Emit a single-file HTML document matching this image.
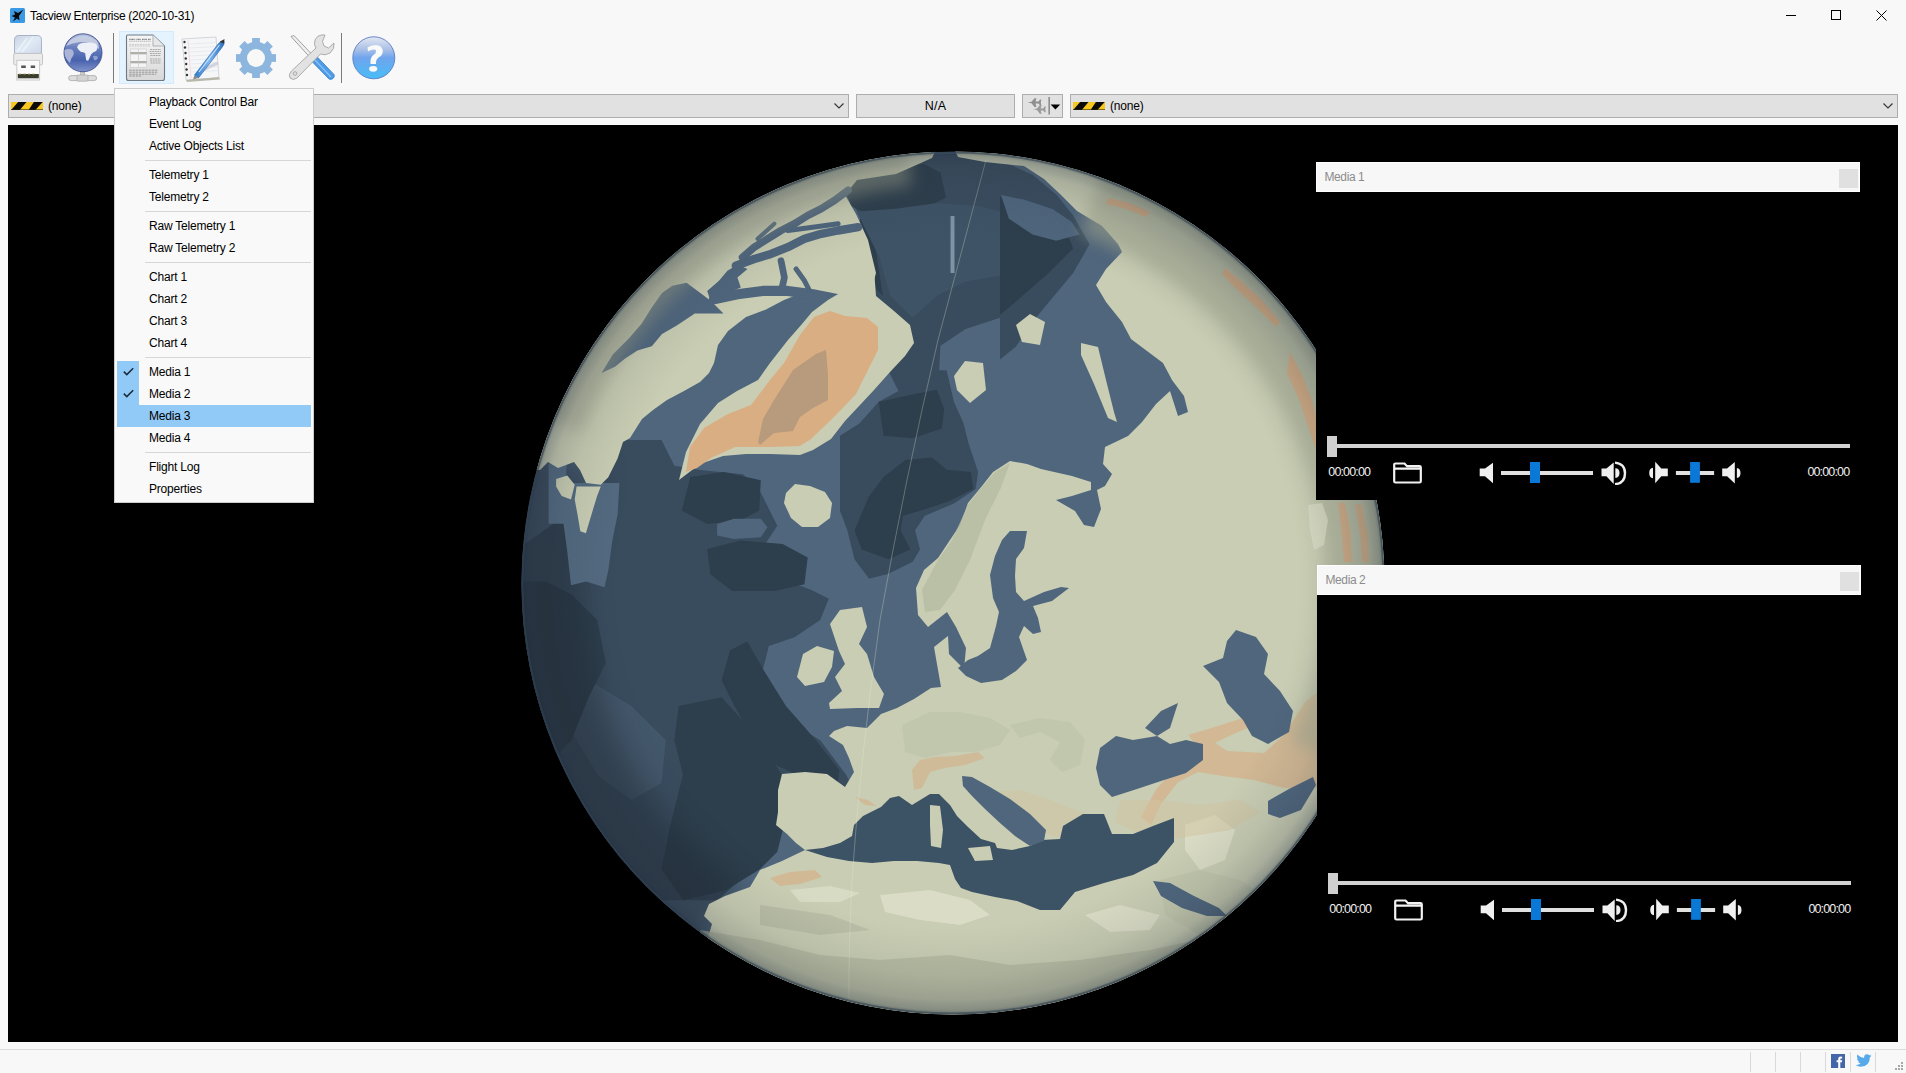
<!DOCTYPE html>
<html><head><meta charset="utf-8">
<style>
*{margin:0;padding:0;box-sizing:border-box}
html,body{width:1906px;height:1073px;overflow:hidden;background:#f8f8f8;font-family:"Liberation Sans",sans-serif;font-size:12px;color:#000}
.abs{position:absolute}
#title{left:30px;top:8.5px;font-size:12px;line-height:14px;color:#000;white-space:nowrap;letter-spacing:-0.3px}
.combo{position:absolute;top:94px;height:24px;background:#e1e1e1;border:1px solid #adadad}
.menu{position:absolute;left:114px;top:88px;width:200px;height:415px;background:#f9f9f9;border:1px solid #cccccc}
.mi{position:absolute;left:34px;font-size:12px;line-height:14px;color:#000;white-space:nowrap;letter-spacing:-0.2px}
.sep{position:absolute;left:30px;width:166px;height:1px;background:#d7d7d7}
#view{left:8px;top:125px;width:1890px;height:917px;background:#000;overflow:hidden}
.mhdr{position:absolute;background:#f7f7f7;border:1px solid #fff;height:30px}
.mhdr span{position:absolute;left:7.5px;top:6.8px;color:#8c8c8c;font-size:12px;line-height:14px;letter-spacing:-0.4px}
.mhdr i{position:absolute;right:1px;top:6px;width:19px;height:19px;background:#e0e0e0}
.time{position:absolute;color:#f0f0f0;font-size:12.5px;line-height:14px;letter-spacing:-0.85px;white-space:nowrap}
#status{left:0;top:1049px;width:1906px;height:24px;background:#f8f8f8;border-top:1px solid #dcdcdc}

</style></head><body>
<svg class="abs" style="left:10px;top:8px" width="15" height="15" viewBox="0 0 15 15">
<rect x="0" y="0" width="15" height="15" rx="1.5" fill="#3a9ae6"/>
<path d="M13.5 1.5 L8 5 L4 3 L5 6.5 L1.5 8 L5 9.5 L3 13.5 L7 10.5 L9.5 12.5 L9 8 Z" fill="#0a0a0a"/>
</svg>
<div id="title" class="abs">Tacview Enterprise (2020-10-31)</div>
<svg class="abs" style="left:1780px;top:5px" width="120" height="22" viewBox="0 0 120 22">
<line x1="6" y1="10.5" x2="16" y2="10.5" stroke="#000" stroke-width="1"/>
<rect x="51.5" y="5.5" width="9" height="9" fill="none" stroke="#000" stroke-width="1"/>
<path d="M96.5 5.5 L106.5 15.5 M106.5 5.5 L96.5 15.5" stroke="#000" stroke-width="1"/>
</svg>
<svg class="abs" style="left:0;top:28px" width="420" height="60" viewBox="0 28 420 60">
<defs>
<linearGradient id="usbcap" x1="0" y1="0" x2="1" y2="1"><stop offset="0" stop-color="#c9d3e3"/><stop offset="0.5" stop-color="#dfeaf5"/><stop offset="1" stop-color="#cdd6ea"/></linearGradient>
<radialGradient id="glb" cx="0.45" cy="0.3" r="0.8"><stop offset="0" stop-color="#9fb0d8"/><stop offset="0.6" stop-color="#4d6bb4"/><stop offset="1" stop-color="#34529c"/></radialGradient>
<linearGradient id="glb2" x1="0" y1="0" x2="0" y2="1"><stop offset="0" stop-color="#b9c3e0"/><stop offset="0.35" stop-color="#6a80bf"/><stop offset="0.7" stop-color="#4862ad"/><stop offset="1" stop-color="#8294cc"/></linearGradient>
<linearGradient id="page" x1="0" y1="0" x2="0" y2="1"><stop offset="0" stop-color="#f6f6f6"/><stop offset="1" stop-color="#d8d8d8"/></linearGradient>
<linearGradient id="help" x1="0" y1="0" x2="0" y2="1"><stop offset="0" stop-color="#e4e8f2"/><stop offset="0.3" stop-color="#a9c0e6"/><stop offset="0.5" stop-color="#6fa4ee"/><stop offset="1" stop-color="#48bdf6"/></linearGradient>
<linearGradient id="pen" x1="0" y1="0" x2="1" y2="0"><stop offset="0" stop-color="#2f78c8"/><stop offset="0.5" stop-color="#7fb6ee"/><stop offset="1" stop-color="#2a6fc0"/></linearGradient>
</defs>
<!-- USB -->
<path d="M14.5 53.5 L14.5 40 Q14.5 35.5 19 35.5 L37 35.5 Q41.5 35.5 41.5 40 L41.5 53.5Z" fill="url(#usbcap)" stroke="#a9b5c6" stroke-width="1"/>
<path d="M17 52 L27 38 M22 52 L33 37" stroke="#eef6fb" stroke-width="1.5" opacity="0.8"/>
<rect x="13.7" y="53.4" width="28.8" height="11.5" rx="1.5" fill="#ececec" stroke="#c4c4c4" stroke-width="1"/>
<rect x="16.8" y="60.3" width="22.8" height="19.7" fill="#fafafa" stroke="#c9c9c9" stroke-width="1"/>
<rect x="21.2" y="65.5" width="4.6" height="2.5" fill="#555"/>
<rect x="30.7" y="65.5" width="4.4" height="2.5" fill="#555"/>
<rect x="17.8" y="74" width="21" height="4.3" fill="#3b3d2c"/>
<path d="M19 74 h2 M23.5 74 h2 M28 74 h2 M32.5 74 h2" stroke="#b8a86a" stroke-width="1.2"/>
<!-- globe -->
<rect x="80.6" y="71" width="4.1" height="5" fill="#cfcfcf" stroke="#9a9a9a" stroke-width="0.5"/>
<rect x="68.6" y="75.6" width="28" height="5" rx="2.5" fill="#dcdcdc" stroke="#a8a8a8" stroke-width="0.8"/>
<rect x="77" y="75" width="11" height="6.2" rx="1.2" fill="#d2d2d2" stroke="#a0a0a0" stroke-width="0.6"/>
<circle cx="83" cy="52.8" r="19" fill="url(#glb2)" stroke="#3d4f90" stroke-width="0.9"/>
<path d="M66 46 Q70 38 80 36 Q90 35 97 41 Q99 45 99 49 Q90 41 80 42 Q72 43 66 46Z" fill="#c8cfe2" opacity="0.9"/>
<path d="M77.1 47.6 Q78 45 78.1 45.1 Q80 43.5 82.1 43.1 L90.2 42.6 Q94 43 96.2 44.1 L97.5 48 L96.2 51.1 Q93 52 91.2 54.2 Q89.5 58 88.2 60.7 L86.2 60.2 Q85.5 56 85.2 53.2 Q83 52 81.1 52.1 Q78.5 50.5 77.1 47.6Z" fill="#eef0f8"/>
<path d="M64.5 50 Q68 48.5 72 49.5 Q74.5 52 73.5 55 Q71 58 70 63 Q66.5 60 65 56 Q64.3 53 64.5 50Z" fill="#aab4d6"/>
<path d="M93 56 Q96 55 98 57 Q97 61 94 60Z" fill="#9fb0da" opacity="0.8"/>
<!-- sep -->
<rect x="113" y="33" width="1" height="50" fill="#7a7a7a"/>
<!-- highlight -->
<rect x="119.5" y="31.5" width="54" height="52" fill="#e5f3ff" stroke="#d4ebff" stroke-width="1"/>
<!-- doc -->
<path d="M127.5 35 L153 35 L164.5 46 L164.5 78.5 Q164.5 80.5 162.5 80.5 L128.5 80.5 Q126.5 80.5 126.5 78.5 L126.5 36 Q126.5 35 127.5 35Z" fill="url(#page)" stroke="#6b7a84" stroke-width="1.1"/>
<path d="M153 35 L153 46 L164.5 46" fill="#e8e8e8" stroke="#9aa4aa" stroke-width="0.8"/>
<path d="M129.2 39.3 h6 M136.5 39.3 h4.5 M142 39.3 h5 M148 39.3 h3" stroke="#7d7d7d" stroke-width="1.3" stroke-dasharray="1 0.4"/>
<path d="M129.2 41.2 h21.7" stroke="#9a9a9a" stroke-width="0.7" stroke-dasharray="1.5 0.6"/>
<path d="M129.2 44.6 h21.7 M129.2 46 h21.7" stroke="#b4b4b4" stroke-width="0.6" stroke-dasharray="2 0.7"/>
<rect x="130.4" y="49" width="16.3" height="18.2" fill="#f4f4f4" stroke="#c4c4c4" stroke-width="0.5"/>
<rect x="130.4" y="52" width="16.3" height="2.3" fill="#aeb0a8"/>
<rect x="130.4" y="61" width="16.3" height="2.3" fill="#aeb0a8"/>
<rect x="138.3" y="49" width="0.6" height="18.2" fill="#c4c4c4"/>
<path d="M150 49.5 h11 M149.5 51.5 h11.5 M150 53.5 h11 M150.5 55.5 h10.5 M150 59 h11 M150 61 h11 M150.5 63 h10.5" stroke="#8c8c8c" stroke-width="0.7" stroke-dasharray="2 0.6"/>
<path d="M129.2 70.2 h28.8 M129.2 72.2 h28.8 M129.2 74.2 h27 M129.2 76 h12" stroke="#7a7a7a" stroke-width="0.7" stroke-dasharray="2.5 0.7"/>
<!-- notepad -->
<path d="M182 39 L216 37 L219 78 L186 80Z" fill="#f5f6f8" stroke="#c9cbd0" stroke-width="0.8"/>
<path d="M188 40 L191 79" stroke="#f0c8c8" stroke-width="0.6"/>
<path d="M189 44 L217 42.5 M189 48 L217 46.5 M189.5 52 L217.5 50.5 M190 56 L218 54.5 M190 60 L218 58.5 M190.5 64 L218.5 62.5 M190.5 68 L218.5 66.5 M191 72 L219 70.5" stroke="#dfe3ea" stroke-width="0.6"/>
<g fill="#333"><circle cx="184.5" cy="42" r="1.2"/><circle cx="185" cy="47.5" r="1.2"/><circle cx="185.5" cy="53" r="1.2"/><circle cx="185.8" cy="58.5" r="1.2"/><circle cx="186.2" cy="64" r="1.2"/><circle cx="186.6" cy="69.5" r="1.2"/><circle cx="187" cy="75" r="1.2"/></g>
<path d="M186 80 L219 77 L220 79.5 L187 82Z" fill="#b8b8aa"/>
<path d="M200 72 Q206 68 218 63" stroke="#c5c8d2" stroke-width="3" opacity="0.7"/>
<path d="M194.5 75 L218.5 43.5 Q221.5 40 224 41 Q225 44 222 47.5 L198.5 78Z" fill="url(#pen)" stroke="#2a64b0" stroke-width="0.6"/>
<path d="M199 72 L219.5 45" stroke="#d6ebff" stroke-width="1.1" opacity="0.9"/>
<path d="M194.5 75 L193 79.5 L198.5 78Z" fill="#8a8a8a"/>
<path d="M219.5 42 L224.5 39 L224 43.5Z" fill="#333"/>
<!-- gear -->
<g transform="translate(256 58)" fill="#8db6de">
<circle r="16.3"/>
<g id="teeth"><rect x="-3.9" y="-20" width="7.8" height="6"/><rect x="-3.9" y="14" width="7.8" height="6"/><rect x="-20" y="-3.9" width="6" height="7.8"/><rect x="14" y="-3.9" width="6" height="7.8"/></g>
<g transform="rotate(45)"><rect x="-3.9" y="-20" width="7.8" height="6"/><rect x="-3.9" y="14" width="7.8" height="6"/><rect x="-20" y="-3.9" width="6" height="7.8"/><rect x="14" y="-3.9" width="6" height="7.8"/></g>
<circle r="9" fill="#f8f8f8"/>
</g>
<!-- tools -->
<path d="M291 36.5 L294 35.5 L313 55.5 L310.5 58Z" fill="#efefef" stroke="#8c8c8c" stroke-width="0.8"/>
<path d="M309 57.5 L313.5 53 L334 74.5 Q335 76.5 333 78.5 Q331 80 329 79 L308.5 58Z" fill="#4f9be6" stroke="#3a7fc8" stroke-width="0.8"/>
<path d="M313 58 L331 77" stroke="#86c0f5" stroke-width="1.3"/>
<path d="M325 35 Q318 34 315 40 Q313.5 45 316 48 L291.5 71 Q288 74.5 290 78 Q293 81 297 78 L320.5 54 Q325 56 330 53 Q335 49 334 43 L328.5 48 L324 46 L322.5 41.5Z" fill="#e2e2e2" stroke="#a4a4a4" stroke-width="0.9"/>
<circle cx="295" cy="73.5" r="1.8" fill="none" stroke="#9a9a9a" stroke-width="0.8"/>
<!-- sep -->
<rect x="341" y="33" width="1" height="50" fill="#7a7a7a"/>
<!-- help -->
<circle cx="373.8" cy="57.8" r="21" fill="url(#help)" stroke="#5b7bc4" stroke-width="0.9"/>
<path d="M367.5 47.5 Q371 45 375.5 45 Q382.5 45.5 382.8 51 Q383 55 378.5 57.5 Q376 59 376 62 L376 64 L370.5 64 L370.5 61 Q370.5 57 374 54.5 Q376.5 52.5 376 50.5 Q375.5 49 373 49.5 Q370 50 368 51.5Z" fill="#fafafa"/>
<ellipse cx="373.2" cy="68.8" rx="4.1" ry="2.9" fill="#fafafa"/>
</svg>

<div class="combo" style="left:8px;width:841px">
 <svg class="abs" style="left:2px;top:7px" width="32" height="8" viewBox="0 0 32 8"><rect width="32" height="8" fill="#f8c820"/><path d="M0.2 8 L8.8 8 L15.5 0 L7.1 0Z M17.6 8 L24.4 8 L31.7 0 L22.9 0Z" fill="#0a0a0a"/><rect y="7.2" width="32" height="0.8" fill="#2a2500" opacity="0.7"/></svg>
 <div class="abs" style="left:39px;top:4.4px;line-height:14px;letter-spacing:-0.2px">(none)</div>
 <svg class="abs" style="right:4px;top:8px" width="10" height="6" viewBox="0 0 10 6"><path d="M0.5 0.5 L5 5 L9.5 0.5" fill="none" stroke="#333" stroke-width="1.1"/></svg>
</div>
<div class="combo" style="left:856px;width:159px"><div class="abs" style="left:0;width:157px;top:3.8px;text-align:center;line-height:14px;font-size:12.5px;letter-spacing:0.3px">N/A</div></div>
<div class="combo" style="left:1022px;width:41px">
 <svg class="abs" style="left:0;top:0" width="40" height="22" viewBox="1023 95 40 22">
  <path d="M1027.5 102.5 L1031.5 101.8 L1034.5 98.3 L1036.5 98.3 L1035.5 101.6 L1038.5 101.6 L1040 99.6 L1041.3 99.6 L1040.8 102.6 L1041.3 105.6 L1040 105.6 L1038.5 103.6 L1035.5 103.6 L1036.5 107 L1034.5 107 L1031.5 103.3Z" fill="#8f8f8f"/>
  <path d="M1033.3 109.3 L1037 108.6 L1039.8 105.3 L1041.6 105.3 L1040.7 108.4 L1043.2 108.4 L1044.6 106.6 L1045.8 106.6 L1045.3 109.4 L1045.8 112.2 L1044.6 112.2 L1043.2 110.4 L1040.7 110.4 L1041.6 113.7 L1039.8 113.7 L1037 110.1Z" fill="#9a9a9a"/>
  <rect x="1048.5" y="97" width="1.3" height="17.5" fill="#7a7a7a"/>
  <path d="M1050.6 104.6 L1060.2 104.6 L1055.4 109.4Z" fill="#000"/>
 </svg>
</div>
<div class="combo" style="left:1070px;width:828px">
 <svg class="abs" style="left:2px;top:7px" width="32" height="8" viewBox="0 0 32 8"><rect width="32" height="8" fill="#f8c820"/><path d="M0.2 8 L8.8 8 L15.5 0 L7.1 0Z M17.6 8 L24.4 8 L31.7 0 L22.9 0Z" fill="#0a0a0a"/><rect y="7.2" width="32" height="0.8" fill="#2a2500" opacity="0.7"/></svg>
 <div class="abs" style="left:39px;top:4.4px;line-height:14px;letter-spacing:-0.2px">(none)</div>
 <svg class="abs" style="right:4px;top:8px" width="10" height="6" viewBox="0 0 10 6"><path d="M0.5 0.5 L5 5 L9.5 0.5" fill="none" stroke="#333" stroke-width="1.1"/></svg>
</div>
<div id="status" class="abs">
 <div class="abs" style="left:1750px;top:1.5px;width:1px;height:20px;background:#d9d9d9"></div>
 <div class="abs" style="left:1775px;top:1.5px;width:1px;height:20px;background:#d9d9d9"></div>
 <div class="abs" style="left:1800px;top:1.5px;width:1px;height:20px;background:#d9d9d9"></div>
 <div class="abs" style="left:1825px;top:1.5px;width:1px;height:20px;background:#d9d9d9"></div>
 <div class="abs" style="left:1850px;top:1.5px;width:1px;height:20px;background:#d9d9d9"></div>
 <div class="abs" style="left:1875px;top:1.5px;width:1px;height:20px;background:#d9d9d9"></div>
 <svg class="abs" style="left:1831px;top:4px" width="14" height="14" viewBox="0 0 14 14"><rect width="14" height="14" fill="#4465a8"/><path d="M7.2 14 L7.2 8.2 L5.6 8.2 L5.6 6.3 L7.2 6.3 L7.2 4.9 Q7.2 2.6 9.6 2.6 L11.2 2.7 L11.2 4.4 L10.1 4.4 Q9.3 4.4 9.3 5.3 L9.3 6.3 L11.2 6.3 L10.9 8.2 L9.3 8.2 L9.3 14Z" fill="#fff"/></svg>
 <svg class="abs" style="left:1855px;top:4px" width="17" height="14" viewBox="0 0 17 14"><path d="M16.5 1.8 Q15.8 2.2 14.8 2.3 Q15.9 1.6 16.2 0.6 Q15.3 1.1 14.3 1.3 Q13.4 0.3 12 0.3 Q9.2 0.4 9.1 3.3 L9.2 3.9 Q5 3.7 2.3 0.6 Q1.1 2.9 3.2 4.7 Q2.5 4.6 1.9 4.3 Q1.9 6.6 4.3 7.3 Q3.6 7.5 3 7.4 Q3.7 9.5 5.8 9.6 Q3.6 11.3 0.5 11 Q3 12.7 5.8 12.7 Q14.8 12.4 14.9 3.6 L14.9 3.2 Q15.9 2.6 16.5 1.8Z" fill="#58a9e9"/></svg>
 <svg class="abs" style="left:1894px;top:12px" width="10" height="10" viewBox="0 0 10 10" fill="#a8a8a8"><rect x="7" y="0" width="2" height="2"/><rect x="4" y="3" width="2" height="2"/><rect x="7" y="3" width="2" height="2"/><rect x="1" y="6" width="2" height="2"/><rect x="4" y="6" width="2" height="2"/><rect x="7" y="6" width="2" height="2"/></svg>
</div>

<div id="view" class="abs">
<svg class="abs" style="left:0;top:0" width="1890" height="917" viewBox="8 125 1890 917">
<defs><filter id="bl8" x="-20%" y="-20%" width="140%" height="140%" color-interpolation-filters="sRGB"><feGaussianBlur stdDeviation="8"/></filter><filter id="bl10" x="-20%" y="-20%" width="140%" height="140%" color-interpolation-filters="sRGB"><feGaussianBlur stdDeviation="10"/></filter><filter id="bl14" x="-20%" y="-20%" width="140%" height="140%" color-interpolation-filters="sRGB"><feGaussianBlur stdDeviation="14"/></filter></defs>
<defs><clipPath id="gc"><circle cx="953" cy="583" r="431.5"/></clipPath>
<radialGradient id="rim" cx="953" cy="583" r="431.5" gradientUnits="userSpaceOnUse"><stop offset="0.80" stop-color="#2a3440" stop-opacity="0"/><stop offset="0.91" stop-color="#2a3440" stop-opacity="0.09"/><stop offset="0.965" stop-color="#2a3440" stop-opacity="0.2"/><stop offset="0.99" stop-color="#243040" stop-opacity="0.34"/><stop offset="1" stop-color="#1c2836" stop-opacity="0.55"/></radialGradient></defs>
<g clip-path="url(#gc)"><circle cx="953" cy="583" r="431.5" fill="#4f667d"/>
<path d="M942.0 174.6 L995.3 158.2 L1032.2 174.6 L1056.8 195.1 L1073.2 215.6 L1089.6 244.3 L1073.2 273.0 L1052.7 297.6 L1032.2 322.2 L1015.8 346.8 L995.3 363.2 L966.6 379.6 L942.0 396.0 L921.5 404.2 L901.0 396.0 L884.6 363.2 L860.0 346.8 L860.0 191.0 L901.0 178.7Z" fill="#394c5e"/>
<path d="M860.0 178.7 L901.0 174.6 L942.0 182.8 L995.3 195.1 L1032.2 207.4 L1065.0 227.9 L1073.2 248.4 L1048.6 273.0 L1015.8 301.7 L991.2 322.2 L966.6 338.6 L942.0 342.7 L917.4 330.4 L892.8 305.8 L860.0 273.0Z" fill="#2d3e4c"/>
<path d="M834.2 161.2 L937.6 154.2 L1000.0 152.8 L1000.0 450.0 L895.7 450.0 L906.9 345.7 L884.5 306.6 L873.3 233.9 L845.4 194.7Z" fill="#394c5e"/>
<path d="M839.8 172.4 L878.9 166.8 L923.7 164.0 L940.4 172.4 L946.0 197.5 L912.5 214.3 L873.3 217.1 L851.0 205.9Z" fill="#2d3e4c"/>
<path d="M856.6 211.5 L895.7 208.7 L937.6 203.1 L979.6 205.9 L1000.0 211.5 L1000.0 275.8 L965.6 281.4 L937.6 295.4 L912.5 317.7 L890.1 295.4 L878.9 256.2Z" fill="#3e5366"/>
<path d="M940.4 345.7 L965.6 328.9 L1000.0 317.7 L1000.0 450.0 L946.0 450.0 L937.6 401.6Z" fill="#4f667d"/>
<path d="M1001.0 195.1 L1024.6 199.8 L1053.0 209.3 L1071.8 221.9 L1079.7 234.4 L1056.1 240.7 L1032.5 234.4 L1008.9 218.7Z" fill="#4f667d"/>
<path d="M912.7 370.3 L946.6 370.3 L953.9 401.8 L963.6 423.6 L968.4 443.0 L978.1 472.1 L975.7 489.0 L953.9 503.6 L924.8 515.7 L915.1 530.2 L920.0 549.6 L912.7 561.7 L888.5 573.8 L869.1 578.7 L854.5 559.3 L847.3 530.2 L840.0 510.8 L840.0 435.7 L859.4 423.6 L878.8 401.8 L900.6 389.7Z" fill="#394c5e"/>
<path d="M878.8 401.8 L912.7 394.5 L936.9 389.7 L944.2 409.1 L941.8 428.5 L912.7 438.2 L883.6 435.7Z" fill="#2d3e4c"/>
<path d="M905.4 460.0 L932.1 457.5 L946.6 469.7 L970.8 472.1 L973.3 489.0 L949.0 501.2 L920.0 510.8 L903.0 515.7 L900.6 530.2 L910.3 549.6 L888.5 559.3 L861.8 549.6 L854.5 530.2 L869.1 496.3 L883.6 476.9Z" fill="#2d3e4c"/>
<path d="M520.0 547.2 L562.9 517.2 L588.6 491.5 L610.1 465.7 L622.9 440.0 L661.5 440.0 L674.4 465.7 L700.1 470.0 L743.0 474.3 L760.2 491.5 L777.3 525.8 L760.2 551.5 L743.0 577.2 L777.3 577.2 L811.6 590.1 L828.8 598.7 L820.2 620.1 L794.5 637.3 L768.8 645.9 L760.2 680.2 L777.3 714.5 L820.2 740.2 L846.0 774.5 L854.5 791.7 L820.2 796.0 L785.9 813.1 L777.3 843.2 L760.2 864.6 L743.0 877.5 L717.3 900.2 L520.0 900.2Z" fill="#394c5e"/>
<path d="M554.3 663.0 L588.6 680.2 L631.5 705.9 L665.8 740.2 L661.5 783.1 L631.5 800.3 L597.2 774.5 L571.5 731.6 L554.3 697.3Z" fill="#43576a"/>
<path d="M730.2 650.2 L747.3 641.6 L764.5 671.6 L785.9 705.9 L815.9 740.2 L839.5 770.2 L837.4 785.3 L807.4 778.8 L777.3 766.0 L753.7 740.2 L734.4 705.9 L721.6 680.2Z" fill="#2d3e4c"/>
<path d="M678.7 705.9 L721.6 697.3 L760.2 740.2 L781.6 774.5 L785.9 817.4 L777.3 851.7 L760.2 868.9 L725.9 890.3 L683.0 900.2 L661.5 868.9 L670.1 826.0 L683.0 774.5 L674.4 740.2Z" fill="#2d3e4c"/>
<path d="M520.0 581.5 L545.7 581.5 L571.5 594.4 L597.2 620.1 L605.8 663.0 L588.6 697.3 L571.5 740.2 L545.7 766.0 L520.0 766.0Z" fill="#2d3e4c"/>
<path d="M690.3 476.9 L723.9 471.9 L760.8 480.3 L759.1 510.4 L740.6 520.5 L707.1 523.9 L681.9 510.4Z" fill="#2d3e4c"/>
<path d="M707.1 549.0 L740.6 540.6 L782.6 544.0 L807.7 557.4 L804.4 584.2 L774.2 590.9 L732.2 590.9 L710.4 574.2Z" fill="#2d3e4c"/>
<path d="M717.1 523.9 L733.9 518.8 L760.8 518.8 L767.5 527.2 L760.8 537.3 L733.9 539.0 L717.1 535.6Z" fill="#4f667d"/>
<path d="M694.9 951.6 L683.3 943.2 L671.9 934.4 L660.9 925.3 L650.1 915.8 L639.7 906.0 L629.6 895.9 L619.8 885.4 L610.3 874.7 L601.2 863.6 L592.4 852.2 L584.0 840.6 L576.0 828.7 L568.4 816.6 L561.1 804.2 L554.3 791.7 L547.9 778.9 L541.8 765.9 L536.2 752.7 L531.0 739.3 L526.3 725.8 L521.9 712.1 L518.0 698.3 L514.6 684.4 L511.6 670.4 L509.0 656.3 L506.9 642.1 L505.2 627.9 L504.0 613.6 L503.3 599.3 L503.0 585.0 L503.2 570.6 L503.8 556.3 L504.9 542.0 L506.4 527.8 L508.4 513.6 L510.8 499.5 L513.7 485.4 L517.0 471.5 L520.8 457.6 L525.0 443.9 L601.1 468.7 L597.6 479.9 L594.5 491.3 L591.8 502.8 L589.4 514.3 L587.4 525.9 L585.8 537.6 L584.5 549.3 L583.7 561.1 L583.1 572.8 L583.0 584.6 L583.2 596.4 L583.9 608.2 L584.8 619.9 L586.2 631.6 L587.9 643.3 L590.0 654.9 L592.5 666.4 L595.4 677.8 L598.6 689.2 L602.1 700.4 L606.0 711.5 L610.3 722.5 L614.9 733.3 L619.9 744.0 L625.2 754.6 L630.8 764.9 L636.8 775.1 L643.0 785.1 L649.6 794.8 L656.5 804.4 L663.7 813.7 L671.2 822.8 L679.0 831.7 L687.1 840.3 L695.4 848.6 L704.0 856.7 L712.8 864.5 L721.9 872.0 L731.2 879.2 L740.8 886.1Z" fill="#1c2630" fill-opacity="0.45" filter="url(#bl14)"/>
<path d="M565.4 482.9 L619.4 482.9 L617.6 514.5 L612.0 542.5 L608.3 570.4 L604.5 587.2 L585.9 581.6 L571.0 585.3 L567.3 551.8 L563.5 523.8 L548.6 523.8 L548.6 458.6 L567.3 458.6Z" fill="#52697f"/>
<path d="M960.0 100.0 L932.0 158.0 L896.0 174.0 L857.0 180.0 L845.0 195.0 L856.0 214.0 L868.0 240.0 L876.0 273.0 L870.0 295.0 L830.0 300.0 L802.0 293.0 L784.0 300.0 L765.0 310.0 L746.0 317.0 L728.0 331.0 L718.0 345.0 L714.0 363.0 L709.0 373.0 L700.0 382.0 L684.0 391.0 L667.0 400.0 L653.0 410.0 L642.0 419.0 L630.0 438.0 L623.0 442.0 L617.6 458.6 L608.3 477.3 L600.8 484.7 L586.0 483.0 L580.0 470.0 L574.0 462.0 L558.0 468.0 L548.0 462.0 L540.0 470.0 L480.0 470.0 L480.0 100.0Z" fill="#c9cdb3"/>
<path d="M601.5 373.0 L612.8 354.5 L629.2 338.1 L641.5 323.8 L651.8 307.4 L662.0 293.0 L672.3 285.8 L686.6 282.8 L703.0 295.1 L711.2 301.2 L723.5 313.5 L694.8 313.5 L676.4 325.8 L662.0 334.0 L651.8 346.3 L637.4 350.4 L625.1 358.6 L614.9 366.8Z" fill="#4f667d"/>
<path d="M710.6 300.9 L729.0 292.5 L740.8 287.5 L737.4 277.4 L747.5 269.0 L737.4 264.8 L727.4 270.7 L719.0 280.8 L707.2 290.9Z" fill="#4f667d"/>
<path d="M735.8 265.7 L754.2 259.0 L771.0 253.9 L787.8 247.2 L804.5 238.8 L821.3 233.8 L838.1 230.5 L858.2 227.1" fill="none" stroke="#4f667d" stroke-width="8.4" stroke-linecap="round" stroke-linejoin="round"/>
<path d="M742.5 257.3 L754.2 247.2 L767.6 238.8 L781.0 230.5 L794.5 223.7 L807.9 215.4 L821.3 208.6 L834.7 200.3 L848.1 190.2" fill="none" stroke="#4f667d" stroke-width="7.5" stroke-linecap="round" stroke-linejoin="round"/>
<path d="M757.6 238.8 L774.3 223.7" fill="none" stroke="#4f667d" stroke-width="4.2" stroke-linecap="round" stroke-linejoin="round"/>
<path d="M787.8 230.5 L814.6 227.1 L838.1 223.7" fill="none" stroke="#4f667d" stroke-width="5.0" stroke-linecap="round" stroke-linejoin="round"/>
<path d="M781.0 260.7 L784.4 277.4 L781.0 292.5" fill="none" stroke="#4f667d" stroke-width="6.7" stroke-linecap="round" stroke-linejoin="round"/>
<path d="M713.9 299.2 L737.4 294.2 L762.6 290.9 L787.8 290.9 L812.9 294.2 L838.1 299.2 L863.2 299.2" fill="none" stroke="#4f667d" stroke-width="10.1" stroke-linecap="round" stroke-linejoin="round"/>
<path d="M796.1 269.0 L804.5 280.8 L809.6 290.9" fill="none" stroke="#4f667d" stroke-width="5.0" stroke-linecap="round" stroke-linejoin="round"/>
<path d="M737.4 340.0 L747.5 321.0 L762.6 311.0 L781.0 307.6 L797.8 304.3 L812.9 302.6 L804.5 311.0 L801.2 321.0 L796.1 340.0Z" fill="#4f667d"/>
<path d="M576.6 486.6 L600.8 486.6 L597.1 495.9 L591.5 514.5 L585.9 533.2 L580.3 531.3 L577.5 514.5 L574.7 499.6Z" fill="#c9cdb3"/>
<path d="M556.1 479.1 L567.3 475.4 L574.7 484.7 L571.0 499.6 L561.7 495.9 L556.1 486.6Z" fill="#c9cdb3"/>
<path d="M679.0 480.0 L686.0 452.0 L700.0 424.0 L718.0 403.0 L737.0 391.0 L758.0 380.0 L770.0 363.0 L788.0 340.0 L802.0 324.0 L812.0 312.0 L828.0 300.0 L845.0 290.0 L874.0 269.0 L876.0 296.0 L894.0 311.0 L910.0 325.0 L914.0 343.0 L905.0 356.0 L890.0 372.0 L874.0 390.0 L860.0 405.0 L845.0 421.0 L831.0 439.0 L813.0 450.0 L800.0 455.0 L770.0 454.0 L746.0 454.0 L723.0 456.0 L700.0 464.0Z" fill="#c9cdb3"/>
<path d="M686.0 472.0 L690.0 447.0 L704.0 428.0 L728.0 414.0 L751.0 405.0 L770.0 380.0 L784.0 363.0 L800.0 335.0 L814.0 317.0 L830.0 311.0 L845.0 316.0 L867.0 318.0 L878.0 327.0 L878.0 350.0 L867.0 372.0 L856.0 394.0 L834.0 417.0 L811.0 439.0 L800.0 446.0 L770.0 447.0 L735.0 447.0 L711.0 458.0 L697.0 468.0Z" fill="#d9ae82"/>
<path d="M758.0 442.0 L763.0 419.0 L774.0 400.0 L793.0 370.0 L816.0 354.0 L826.0 350.0 L828.0 375.0 L828.0 400.0 L813.0 408.0 L800.0 417.0 L793.0 431.0 L774.0 433.0 L760.0 445.0Z" fill="#b89a7c"/>
<path d="M786.0 493.0 L795.0 484.0 L810.0 486.0 L825.0 492.0 L832.0 503.0 L830.0 518.0 L818.0 527.0 L802.0 527.0 L791.0 518.0 L784.0 503.0Z" fill="#c9cdb3"/>
<path d="M954.0 376.0 L965.0 361.0 L983.0 363.0 L986.0 390.0 L970.0 403.0 L957.0 390.0Z" fill="#c9cdb3"/>
<path d="M1016.0 325.0 L1030.0 314.0 L1045.0 322.0 L1040.0 345.0 L1022.0 342.0Z" fill="#c9cdb3"/>
<path d="M1081.0 343.0 L1098.0 347.0 L1106.0 380.0 L1114.0 412.0 L1117.0 422.0 L1108.0 418.0 L1094.0 384.0 L1081.0 355.0Z" fill="#c9cdb3"/>
<path d="M950.0 140.0 L958.0 157.0 L985.0 162.0 L1024.0 166.0 L1044.0 179.0 L1061.0 195.0 L1077.0 211.0 L1102.0 226.0 L1118.0 244.0 L1122.0 252.0 L1106.0 269.0 L1096.0 285.0 L1106.0 302.0 L1122.0 322.0 L1131.0 339.0 L1147.0 351.0 L1163.0 363.0 L1172.0 380.0 L1184.0 396.0 L1188.0 412.0 L1178.0 416.0 L1170.0 391.0 L1156.0 404.0 L1142.0 422.0 L1128.0 436.0 L1105.0 447.0 L1103.0 464.0 L1112.0 474.0 L1105.0 486.0 L1097.0 490.0 L1101.0 509.0 L1094.0 527.0 L1084.0 525.0 L1075.0 511.0 L1056.0 500.0 L1072.0 496.0 L1091.0 490.0 L1091.0 482.0 L1072.0 476.0 L1041.0 469.0 L1027.0 464.0 L1010.0 461.0 L993.0 472.0 L982.0 486.0 L968.0 503.0 L960.0 525.0 L950.0 540.0 L938.0 558.0 L924.0 570.0 L916.0 588.0 L918.0 615.0 L928.0 627.0 L947.0 612.0 L956.0 627.0 L966.0 648.0 L964.0 669.0 L949.0 654.0 L948.0 636.0 L934.0 647.0 L941.0 687.0 L931.0 688.0 L914.0 699.0 L897.0 708.0 L881.0 714.0 L867.0 728.0 L847.0 726.0 L834.0 731.0 L829.0 736.0 L843.0 745.0 L849.0 758.0 L854.0 772.0 L845.0 787.0 L827.0 774.0 L805.0 772.0 L782.0 774.0 L778.0 790.0 L778.0 812.0 L776.0 825.0 L787.0 834.0 L796.0 843.0 L805.0 850.0 L782.0 861.0 L760.0 870.0 L750.0 887.0 L725.0 896.0 L709.0 904.0 L704.0 916.0 L712.0 924.0 L690.0 1000.0 L700.0 1100.0 L1400.0 1100.0 L1400.0 100.0Z" fill="#c9cdb3"/>
<path d="M797.0 677.0 L803.0 654.0 L817.0 646.0 L834.0 651.0 L832.0 667.0 L824.0 682.0 L805.0 686.0Z" fill="#c9cdb3"/>
<path d="M830.0 624.0 L840.0 610.0 L862.0 607.0 L867.0 627.0 L859.0 644.0 L867.0 654.0 L874.0 677.0 L884.0 694.0 L879.0 708.0 L857.0 708.0 L830.0 709.0 L829.0 703.0 L842.0 691.0 L835.0 677.0 L845.0 664.0 L839.0 651.0 L835.0 639.0Z" fill="#c9cdb3"/>
<path d="M1188.0 735.0 L1215.0 727.0 L1243.0 718.0 L1250.0 727.0 L1231.0 735.0 L1215.0 743.0 L1227.0 751.0 L1264.0 753.0 L1284.0 735.0 L1305.0 702.0 L1320.0 690.0 L1320.0 788.0 L1284.0 788.0 L1254.0 780.0 L1223.0 776.0 L1198.0 772.0 L1178.0 782.0 L1161.0 804.0 L1151.0 825.0 L1141.0 817.0 L1157.0 788.0 L1182.0 763.0 L1198.0 747.0Z" fill="#d3b48e" fill-opacity="0.85"/>
<path d="M912.0 770.0 L920.0 760.0 L935.0 757.0 L955.0 756.0 L978.0 752.0 L985.0 758.0 L965.0 765.0 L945.0 768.0 L930.0 772.0 L922.0 788.0 L914.0 790.0Z" fill="#d3b48e" fill-opacity="0.7"/>
<path d="M770.0 878.0 L790.0 872.0 L815.0 870.0 L822.0 877.0 L800.0 884.0 L780.0 886.0Z" fill="#d3b48e" fill-opacity="0.8"/>
<path d="M855.0 797.0 L868.0 800.0 L876.0 806.0 L865.0 805.0Z" fill="#d3b48e" fill-opacity="0.7"/>
<path d="M968.0 505.0 L982.0 487.0 L995.0 472.0 L1010.0 463.0 L1000.0 490.0 L985.0 520.0 L970.0 560.0 L955.0 590.0 L940.0 610.0 L925.0 612.0 L922.0 590.0 L938.0 560.0 L952.0 540.0Z" fill="#b7bda2" fill-opacity="0.8"/>
<path d="M880.0 895.0 L930.0 890.0 L970.0 900.0 L990.0 915.0 L960.0 925.0 L920.0 920.0 L885.0 912.0Z" fill="#dcdec7" fill-opacity="0.9"/>
<path d="M1085.0 915.0 L1120.0 905.0 L1160.0 915.0 L1150.0 930.0 L1110.0 932.0Z" fill="#dcdec7" fill-opacity="0.9"/>
<path d="M1185.0 825.0 L1215.0 815.0 L1235.0 830.0 L1225.0 860.0 L1200.0 870.0 L1185.0 850.0Z" fill="#dcdec7" fill-opacity="0.9"/>
<path d="M790.0 890.0 L830.0 886.0 L860.0 893.0 L840.0 902.0 L800.0 902.0Z" fill="#dcdec7" fill-opacity="0.8"/>
<path d="M700.0 930.0 L760.0 940.0 L820.0 955.0 L880.0 960.0 L950.0 955.0 L1010.0 965.0 L1080.0 960.0 L1150.0 950.0 L1220.0 935.0 L1290.0 900.0 L1320.0 880.0 L1320.0 1040.0 L700.0 1040.0Z" fill="#b2b69e" fill-opacity="0.75"/>
<path d="M760.0 905.0 L830.0 915.0 L870.0 930.0 L820.0 935.0 L760.0 925.0Z" fill="#b2b69e" fill-opacity="0.6"/>
<path d="M1160.0 880.0 L1200.0 870.0 L1240.0 880.0 L1270.0 900.0 L1250.0 925.0 L1200.0 935.0 L1165.0 915.0Z" fill="#bfc4aa" fill-opacity="0.7"/>
<path d="M1105.2 164.8 L1122.4 171.5 L1139.3 178.9 L1155.9 186.9 L1172.1 195.7 L1188.0 205.1 L1203.4 215.2 L1218.5 225.9 L1233.0 237.2 L1247.1 249.1 L1260.7 261.5 L1273.8 274.6 L1286.3 288.1 L1298.2 302.2 L1309.6 316.7 L1320.3 331.7 L1330.4 347.2 L1339.8 363.0 L1348.6 379.2 L1356.7 395.8 L1364.1 412.7 L1370.8 429.9 L1376.8 447.3 L1382.1 465.0 L1386.6 482.9 L1390.4 501.0 L1393.4 519.1 L1395.7 537.5 L1397.2 555.8 L1397.9 574.3 L1397.9 592.7 L1397.1 611.1 L1395.6 629.5 L1393.3 647.8 L1390.2 666.0 L1386.4 684.0 L1381.8 701.9 L1376.5 719.6 L1370.5 737.0 L1363.8 754.2 L1356.3 771.1 L1290.1 740.2 L1296.4 726.1 L1302.0 711.8 L1307.0 697.2 L1311.5 682.4 L1315.3 667.5 L1318.5 652.4 L1321.0 637.2 L1323.0 621.9 L1324.3 606.5 L1324.9 591.1 L1324.9 575.7 L1324.3 560.3 L1323.0 544.9 L1321.2 529.6 L1318.6 514.4 L1315.5 499.3 L1311.7 484.4 L1307.3 469.6 L1302.3 455.0 L1296.7 440.6 L1290.5 426.5 L1283.7 412.7 L1276.4 399.1 L1268.5 385.9 L1260.0 373.0 L1251.1 360.4 L1241.6 348.3 L1231.6 336.5 L1221.2 325.2 L1210.2 314.3 L1198.9 303.9 L1187.1 293.9 L1174.9 284.4 L1162.4 275.5 L1149.4 267.1 L1136.2 259.2 L1122.6 251.9 L1108.7 245.2 L1094.6 239.0 L1080.2 233.4Z" fill="#a2a690" fill-opacity="0.6" filter="url(#bl8)"/>
<path d="M540.4 416.3 L545.1 405.2 L550.0 394.2 L555.3 383.4 L560.8 372.7 L566.7 362.2 L572.8 351.8 L579.2 341.6 L585.8 331.6 L592.8 321.7 L600.0 312.1 L607.4 302.7 L615.1 293.4 L623.1 284.4 L631.3 275.6 L639.7 267.0 L648.4 258.6 L657.3 250.5 L666.4 242.6 L675.7 235.0 L685.2 227.6 L694.9 220.5 L704.8 213.6 L714.9 207.1 L725.1 200.8 L735.6 194.7 L746.1 189.0 L756.9 183.5 L767.8 178.4 L778.8 173.5 L789.9 169.0 L801.2 164.7 L812.5 160.8 L824.0 157.1 L835.6 153.8 L847.2 150.8 L859.0 148.0 L870.8 145.7 L882.6 143.6 L894.5 141.9 L906.5 140.4 L911.2 185.2 L900.4 186.5 L889.7 188.0 L879.1 189.9 L868.5 192.0 L857.9 194.5 L847.5 197.2 L837.1 200.2 L826.7 203.4 L816.5 207.0 L806.4 210.8 L796.4 214.9 L786.5 219.3 L776.7 223.9 L767.1 228.8 L757.6 234.0 L748.2 239.4 L739.0 245.1 L729.9 251.0 L721.0 257.2 L712.3 263.5 L703.7 270.2 L695.4 277.0 L687.2 284.1 L679.2 291.4 L671.4 298.9 L663.8 306.6 L656.4 314.6 L649.3 322.7 L642.4 331.0 L635.7 339.5 L629.2 348.2 L623.0 357.0 L617.0 366.0 L611.2 375.2 L605.7 384.5 L600.5 394.0 L595.5 403.6 L590.8 413.3 L586.3 423.2 L582.1 433.2Z" fill="#a2a690" fill-opacity="0.5" filter="url(#bl8)"/>
<path d="M1225.0 268.0 L1240.0 280.0 L1262.0 300.0 L1280.0 322.0 L1276.0 327.0 L1256.0 307.0 L1236.0 289.0 L1222.0 274.0Z" fill="#d0a47c" fill-opacity="0.85"/>
<path d="M1290.0 352.0 L1302.0 375.0 L1312.0 400.0 L1318.0 425.0 L1318.0 455.0 L1310.0 432.0 L1300.0 402.0 L1287.0 373.0Z" fill="#d0a47c" fill-opacity="0.85"/>
<path d="M1108.0 198.0 L1130.0 203.0 L1150.0 212.0 L1146.0 217.0 L1126.0 209.0 L1106.0 204.0Z" fill="#d0a47c" fill-opacity="0.8"/>
<path d="M902.0 725.0 L930.0 712.0 L960.0 712.0 L990.0 718.0 L1010.0 730.0 L1000.0 745.0 L975.0 752.0 L950.0 752.0 L925.0 758.0 L905.0 752.0Z" fill="#bcc3a8" fill-opacity="0.6"/>
<path d="M1010.0 725.0 L1040.0 718.0 L1070.0 722.0 L1085.0 740.0 L1080.0 765.0 L1062.0 772.0 L1050.0 760.0 L1060.0 742.0 L1040.0 732.0 L1020.0 738.0Z" fill="#bcc3a8" fill-opacity="0.6"/>
<path d="M995.0 792.0 L1020.0 790.0 L1050.0 800.0 L1080.0 812.0 L1100.0 822.0 L1095.0 835.0 L1060.0 838.0 L1035.0 830.0 L1010.0 812.0Z" fill="#d2c4a2" fill-opacity="0.5"/>
<path d="M1120.0 800.0 L1160.0 800.0 L1200.0 805.0 L1240.0 800.0 L1260.0 812.0 L1230.0 830.0 L1180.0 838.0 L1140.0 834.0 L1115.0 822.0Z" fill="#d2c4a2" fill-opacity="0.5"/>
<path d="M1338.0 503.0 L1345.0 503.0 L1350.0 530.0 L1352.0 562.0 L1344.0 562.0 L1342.0 535.0Z" fill="#cfa57d" fill-opacity="0.8"/>
<path d="M1355.0 504.0 L1362.0 505.0 L1368.0 535.0 L1369.0 562.0 L1362.0 562.0 L1360.0 535.0Z" fill="#cfa57d" fill-opacity="0.75"/>
<path d="M1308.0 505.0 L1322.0 503.0 L1328.0 520.0 L1324.0 545.0 L1314.0 550.0 L1310.0 530.0Z" fill="#d8dcc4" fill-opacity="0.7"/>
<path d="M1010.0 531.0 L1027.0 531.0 L1024.0 548.0 L1016.0 559.0 L1015.0 576.0 L1016.0 592.0 L1024.0 601.0 L1044.0 592.0 L1061.0 587.0 L1069.0 588.0 L1052.0 601.0 L1033.0 606.0 L1038.0 618.0 L1041.0 632.0 L1033.0 634.0 L1024.0 626.0 L1019.0 637.0 L1027.0 660.0 L1016.0 671.0 L1002.0 680.0 L981.0 683.0 L966.0 676.0 L958.0 668.0 L968.0 660.0 L978.0 656.0 L990.0 648.0 L996.0 626.0 L999.0 612.0 L993.0 598.0 L990.0 575.0 L995.0 556.0 L1002.0 540.0Z" fill="#4f667d"/>
<path d="M1236.0 630.0 L1256.0 637.0 L1268.0 654.0 L1264.0 674.0 L1280.0 691.0 L1293.0 711.0 L1289.0 732.0 L1268.0 744.0 L1252.0 736.0 L1243.0 720.0 L1227.0 703.0 L1219.0 682.0 L1207.0 670.0 L1203.0 666.0 L1223.0 658.0 L1227.0 641.0Z" fill="#4f667d"/>
<path d="M1100.0 748.0 L1116.0 736.0 L1133.0 740.0 L1157.0 736.0 L1170.0 744.0 L1186.0 740.0 L1203.0 744.0 L1203.0 760.0 L1186.0 773.0 L1161.0 781.0 L1137.0 789.0 L1112.0 797.0 L1100.0 785.0 L1096.0 768.0Z" fill="#4f667d"/>
<path d="M1145.0 728.0 L1161.0 711.0 L1178.0 703.0 L1170.0 728.0 L1157.0 736.0Z" fill="#4f667d"/>
<path d="M805.0 850.0 L823.0 848.0 L840.0 843.0 L852.0 836.0 L854.0 825.0 L863.0 816.0 L881.0 807.0 L890.0 798.0 L899.0 796.0 L912.0 805.0 L930.0 794.0 L939.0 794.0 L950.0 805.0 L957.0 816.0 L968.0 827.0 L981.0 839.0 L995.0 843.0 L997.0 848.0 L1012.0 850.0 L1030.0 846.0 L1042.0 840.0 L1060.0 839.0 L1063.0 826.0 L1083.0 814.0 L1104.0 814.0 L1112.0 834.0 L1133.0 834.0 L1153.0 826.0 L1174.0 818.0 L1174.0 842.0 L1157.0 863.0 L1133.0 875.0 L1104.0 883.0 L1075.0 892.0 L1060.0 910.0 L1040.0 910.0 L1017.0 901.0 L995.0 897.0 L972.0 892.0 L961.0 888.0 L955.0 879.0 L950.0 865.0 L939.0 863.0 L917.0 861.0 L894.0 861.0 L872.0 863.0 L849.0 861.0 L827.0 857.0Z" fill="#3c5265"/>
<path d="M962.0 776.0 L972.0 777.0 L990.0 787.0 L1010.0 799.0 L1030.0 814.0 L1046.0 830.0 L1044.0 841.0 L1030.0 846.0 L1015.0 836.0 L1000.0 823.0 L985.0 809.0 L972.0 796.0 L963.0 786.0Z" fill="#4f667d"/>
<path d="M930.0 805.0 L940.0 806.0 L943.0 830.0 L941.0 848.0 L931.0 846.0 L930.0 825.0Z" fill="#c9cdb3"/>
<path d="M968.0 848.0 L990.0 846.0 L993.0 860.0 L975.0 861.0Z" fill="#c9cdb3"/>
<path d="M1153.0 881.0 L1170.0 883.0 L1194.0 896.0 L1219.0 908.0 L1227.0 916.0 L1207.0 916.0 L1182.0 908.0 L1161.0 896.0Z" fill="#4f667d"/>
<path d="M1268.0 801.0 L1289.0 789.0 L1313.0 777.0 L1316.0 785.0 L1301.0 810.0 L1280.0 818.0 L1268.0 814.0Z" fill="#4f667d"/>
<path d="M986 160 Q962 250 938 340 Q905 480 880 620 Q860 760 852 880 Q848 960 849 1015" fill="none" stroke="#e8ead8" stroke-width="1" stroke-opacity="0.3"/>
<rect x="950.5" y="216" width="4" height="57" fill="#8a9fb0" fill-opacity="0.85"/>
<circle cx="953" cy="583" r="431.5" fill="url(#rim)"/><circle cx="953" cy="583" r="430.5" fill="none" stroke="#334455" stroke-width="2" stroke-opacity="0.6"/></g></svg>
<div class="abs" style="left:1308px;top:67px;width:546px;height:308px;background:#000"></div>
<div class="mhdr" style="left:1308px;top:37px;width:544px"><span>Media 1</span><i></i></div>
<div class="abs" style="left:1322px;top:319px;width:520px;height:4px;background:#d2d2d2"></div>
<div class="abs" style="left:1319px;top:311px;width:10px;height:21px;background:#cfcfcf"></div>
<div class="time" style="left:1320.3px;top:339.8px">00:00:00</div>
<div class="time" style="left:1799.4px;top:339.8px">00:00:00</div>
<svg class="abs" style="left:1382px;top:336px" width="360" height="24" viewBox="0 0 360 24">
<path d="M5.5 2.5 L14.5 2.5 L17 5.2 L29.5 5.2 Q30.8 5.2 30.8 6.5 L30.8 20.2 Q30.8 21.5 29.5 21.5 L5.5 21.5 Q4.2 21.5 4.2 20.2 L4.2 3.8 Q4.2 2.5 5.5 2.5Z M4.2 7.6 L30.8 7.6" fill="none" stroke="#f2f2f2" stroke-width="2.2"/>
<path d="M89.7 7.6 L95 7.6 L103 1.8 L103 22.2 L95 15.3 L89.7 15.3Z" fill="#f0f0f0"/>
<rect x="111" y="10" width="92" height="4" fill="#e0e0e0"/>
<rect x="140" y="1" width="10" height="21" fill="#0a78d6"/>
<path d="M211.5 7.6 L216.4 7.6 L223.7 1.5 L223.7 23 L216.4 15.3 L211.5 15.3Z" fill="#f0f0f0"/>
<path d="M225.3 7.2 Q229.5 7.4 229.5 12 Q229.5 16.7 225.3 16.9Z" fill="#f0f0f0"/>
<path d="M225 1.6 Q235 2.6 235 12.2 Q235 22.3 225 23.2" fill="none" stroke="#f0f0f0" stroke-width="2.4"/>
<path d="M263 6.8 Q259.2 7.2 259.2 12 Q259.2 16.8 263 17.3Z" fill="#f0f0f0"/>
<path d="M265.2 0.7 L271.3 7.6 L277.8 7.6 L277.8 15.3 L271.3 15.3 L265.2 22.2Z" fill="#f0f0f0"/>
<rect x="285.9" y="10" width="38.2" height="4" fill="#e0e0e0"/>
<rect x="300.1" y="1" width="9.8" height="20.8" fill="#0a78d6"/>
<path d="M332.2 7.6 L337.1 7.6 L344.8 1 L344.8 22.6 L337.1 15.3 L332.2 15.3Z" fill="#f0f0f0"/>
<path d="M346.9 7 Q350.5 7.5 350.5 12 Q350.5 16.5 346.9 17Z" fill="#f0f0f0"/>
</svg>
<div class="abs" style="left:1309px;top:470px;width:546px;height:447px;background:#000"></div>
<div class="mhdr" style="left:1309px;top:440px;width:544px"><span>Media 2</span><i></i></div>
<div class="abs" style="left:1323px;top:756px;width:520px;height:4px;background:#d2d2d2"></div>
<div class="abs" style="left:1320px;top:748px;width:10px;height:21px;background:#cfcfcf"></div>
<div class="time" style="left:1321.3px;top:776.8px">00:00:00</div>
<div class="time" style="left:1800.4px;top:776.8px">00:00:00</div>
<svg class="abs" style="left:1383px;top:773px" width="360" height="24" viewBox="0 0 360 24">
<path d="M5.5 2.5 L14.5 2.5 L17 5.2 L29.5 5.2 Q30.8 5.2 30.8 6.5 L30.8 20.2 Q30.8 21.5 29.5 21.5 L5.5 21.5 Q4.2 21.5 4.2 20.2 L4.2 3.8 Q4.2 2.5 5.5 2.5Z M4.2 7.6 L30.8 7.6" fill="none" stroke="#f2f2f2" stroke-width="2.2"/>
<path d="M89.7 7.6 L95 7.6 L103 1.8 L103 22.2 L95 15.3 L89.7 15.3Z" fill="#f0f0f0"/>
<rect x="111" y="10" width="92" height="4" fill="#e0e0e0"/>
<rect x="140" y="1" width="10" height="21" fill="#0a78d6"/>
<path d="M211.5 7.6 L216.4 7.6 L223.7 1.5 L223.7 23 L216.4 15.3 L211.5 15.3Z" fill="#f0f0f0"/>
<path d="M225.3 7.2 Q229.5 7.4 229.5 12 Q229.5 16.7 225.3 16.9Z" fill="#f0f0f0"/>
<path d="M225 1.6 Q235 2.6 235 12.2 Q235 22.3 225 23.2" fill="none" stroke="#f0f0f0" stroke-width="2.4"/>
<path d="M263 6.8 Q259.2 7.2 259.2 12 Q259.2 16.8 263 17.3Z" fill="#f0f0f0"/>
<path d="M265.2 0.7 L271.3 7.6 L277.8 7.6 L277.8 15.3 L271.3 15.3 L265.2 22.2Z" fill="#f0f0f0"/>
<rect x="285.9" y="10" width="38.2" height="4" fill="#e0e0e0"/>
<rect x="300.1" y="1" width="9.8" height="20.8" fill="#0a78d6"/>
<path d="M332.2 7.6 L337.1 7.6 L344.8 1 L344.8 22.6 L337.1 15.3 L332.2 15.3Z" fill="#f0f0f0"/>
<path d="M346.9 7 Q350.5 7.5 350.5 12 Q350.5 16.5 346.9 17Z" fill="#f0f0f0"/>
</svg>
</div>
<div class="menu">
<div class="mi" style="top:5.5px">Playback Control Bar</div>
<div class="mi" style="top:27.5px">Event Log</div>
<div class="mi" style="top:49.5px">Active Objects List</div>
<div class="sep" style="top:71px"></div>
<div class="mi" style="top:78.5px">Telemetry 1</div>
<div class="mi" style="top:100.5px">Telemetry 2</div>
<div class="sep" style="top:122px"></div>
<div class="mi" style="top:129.5px">Raw Telemetry 1</div>
<div class="mi" style="top:151.5px">Raw Telemetry 2</div>
<div class="sep" style="top:173px"></div>
<div class="mi" style="top:180.5px">Chart 1</div>
<div class="mi" style="top:202.5px">Chart 2</div>
<div class="mi" style="top:224.5px">Chart 3</div>
<div class="mi" style="top:246.5px">Chart 4</div>
<div class="sep" style="top:268px"></div>
<div class="abs" style="left:2px;top:272px;width:22px;height:22px;background:#91c9f7"></div>
<svg class="abs" style="left:8px;top:278px" width="11" height="9" viewBox="0 0 11 9"><path d="M0.8 4.6 L3.8 7.6 L10.2 1.2" fill="none" stroke="#1b2b3a" stroke-width="1.5"/></svg>
<div class="mi" style="top:275.5px">Media 1</div>
<div class="abs" style="left:2px;top:294px;width:22px;height:22px;background:#91c9f7"></div>
<svg class="abs" style="left:8px;top:300px" width="11" height="9" viewBox="0 0 11 9"><path d="M0.8 4.6 L3.8 7.6 L10.2 1.2" fill="none" stroke="#1b2b3a" stroke-width="1.5"/></svg>
<div class="mi" style="top:297.5px">Media 2</div>
<div class="abs" style="left:2px;top:316px;width:194px;height:22px;background:#91c9f7"></div>
<div class="mi" style="top:319.5px">Media 3</div>
<div class="mi" style="top:341.5px">Media 4</div>
<div class="sep" style="top:363px"></div>
<div class="mi" style="top:370.5px">Flight Log</div>
<div class="mi" style="top:392.5px">Properties</div>
</div>
</body></html>
